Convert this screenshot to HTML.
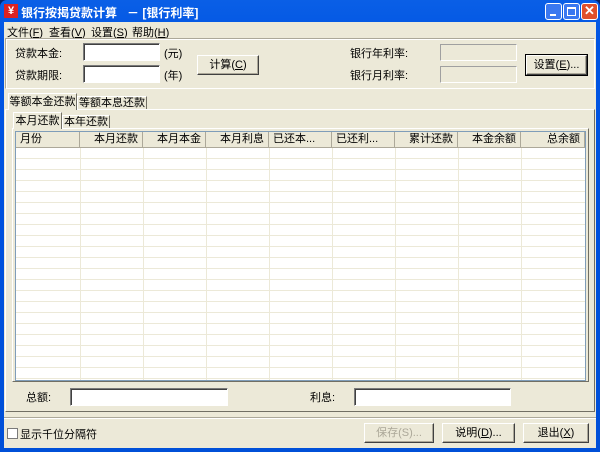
<!DOCTYPE html><html><head><meta charset="utf-8"><style>
*{margin:0;padding:0;box-sizing:border-box}
body{width:600px;height:452px;overflow:hidden;background:#0a246a;font-family:"Liberation Sans","Noto Sans CJK SC","WenQuanYi Zen Hei",sans-serif;font-size:11px;color:#000;position:relative}
.a{position:absolute}
#win{left:0;top:0;width:600px;height:452px;background:linear-gradient(#0a5fe6,#0054e3 10%,#0050d8);border-radius:7px 7px 0 0}
#cl{left:4px;top:22px;width:592px;height:426px;background:#ece9d8}
.t{font-weight:bold;color:#fff;font-size:12px}
.inp{background:#fff;border-top:1px solid #7a7a7a;border-left:1px solid #7a7a7a;border-bottom:1px solid #fff;border-right:1px solid #fff;box-shadow:inset 1px 1px 0 #404040}
.ro{background:#ece9d8;border:1px solid #a0a0a0;border-right-color:#fff;border-bottom-color:#fff}
.btn{border:1px solid #fff;border-right-color:#404040;border-bottom-color:#404040;box-shadow:inset -1px -1px 0 #aca899;text-align:center;line-height:18px;background:#ece9d8}
.tb{border:1px solid #fff;border-bottom:none;border-right-color:#716f64;background:#ece9d8;font-size:11px;text-align:center;white-space:nowrap;overflow:hidden}
.hd{border-right:1px solid #aca899;border-bottom:1px solid #aca899;height:16px;line-height:15px;padding:0 4px;text-align:right;background:#ece9d8;overflow:hidden;white-space:nowrap}
</style></head><body>
<div id="win" class="a"></div>
<div class="a" style="left:4px;top:4px;width:14px;height:14px;background:#d22;color:#fff;font-size:11px;line-height:14px;text-align:center;font-weight:bold">¥</div>
<div class="a t" style="left:21px;top:4px">银行按揭贷款计算&nbsp;&nbsp;&nbsp;－&nbsp;[银行利率]</div>
<div class="a" style="left:545px;top:3px;width:17px;height:17px;background:#3a78f0;border:1px solid #fff;border-radius:3px"><div class="a" style="left:4px;top:10px;width:6px;height:2px;background:#fff"></div></div>
<div class="a" style="left:563px;top:3px;width:17px;height:17px;background:#3a78f0;border:1px solid #fff;border-radius:3px"><div class="a" style="left:3px;top:3px;width:9px;height:9px;border:1px solid #fff;border-top-width:2px"></div></div>
<div class="a" style="left:581px;top:3px;width:17px;height:17px;background:#e0502c;border:1px solid #fff;border-radius:3px;color:#fff;font-weight:bold;font-size:13px;line-height:14px;text-align:center">✕</div>
<div id="cl" class="a"></div>
<div class="a" style="left:7px;top:24px">文件(<u>F</u>)</div>
<div class="a" style="left:49px;top:24px">查看(<u>V</u>)</div>
<div class="a" style="left:91px;top:24px">设置(<u>S</u>)</div>
<div class="a" style="left:132px;top:24px">帮助(<u>H</u>)</div>
<div class="a" style="left:5px;top:38px;width:590px;height:51px;border:1px solid #aca899;border-right-color:#fff;border-bottom-color:#fff;box-shadow:inset 1px 1px 0 #fff"></div>
<div class="a" style="left:15px;top:45px">贷款本金:</div>
<div class="a" style="left:15px;top:67px">贷款期限:</div>
<div class="a inp" style="left:83px;top:43px;width:77px;height:18px"></div>
<div class="a inp" style="left:83px;top:65px;width:77px;height:18px"></div>
<div class="a" style="left:164px;top:45px">(元)</div>
<div class="a" style="left:164px;top:67px">(年)</div>
<div class="a btn" style="left:197px;top:55px;width:62px;height:20px">计算(<u>C</u>)</div>
<div class="a" style="left:350px;top:45px">银行年利率:</div>
<div class="a" style="left:350px;top:67px">银行月利率:</div>
<div class="a ro" style="left:440px;top:44px;width:77px;height:17px"></div>
<div class="a ro" style="left:440px;top:66px;width:77px;height:17px"></div>
<div class="a btn" style="left:526px;top:55px;width:61px;height:20px;outline:1px solid #000">设置(<u>E</u>)...</div>
<div class="a" style="left:5px;top:109px;width:590px;height:303px;border:1px solid #fff;border-right-color:#716f64;border-bottom-color:#716f64"></div>
<div class="a tb" style="left:8px;top:93px;width:69px;height:17px;line-height:16px">等额本金还款</div>
<div class="a tb" style="left:77px;top:96px;width:70px;height:13px;line-height:13px">等额本息还款</div>
<div class="a" style="left:12px;top:128px;width:577px;height:254px;border:1px solid #fff;border-right-color:#716f64;border-bottom-color:#716f64"></div>
<div class="a tb" style="left:13px;top:112px;width:49px;height:17px;line-height:16px">本月还款</div>
<div class="a tb" style="left:62px;top:115px;width:48px;height:13px;line-height:13px">本年还款</div>
<div class="a" style="left:15px;top:131px;width:571px;height:250px;background:#fff;border:1px solid #7f9db9;overflow:hidden">
<svg class="a" style="left:0;top:0" width="571" height="250">
<g stroke="#ece9d8" stroke-width="1">
<line x1="0" x2="571" y1="26.5" y2="26.5"/><line x1="0" x2="571" y1="37.5" y2="37.5"/><line x1="0" x2="571" y1="48.5" y2="48.5"/><line x1="0" x2="571" y1="59.5" y2="59.5"/><line x1="0" x2="571" y1="70.5" y2="70.5"/><line x1="0" x2="571" y1="81.5" y2="81.5"/><line x1="0" x2="571" y1="92.5" y2="92.5"/><line x1="0" x2="571" y1="103.5" y2="103.5"/><line x1="0" x2="571" y1="114.5" y2="114.5"/><line x1="0" x2="571" y1="125.5" y2="125.5"/><line x1="0" x2="571" y1="136.5" y2="136.5"/><line x1="0" x2="571" y1="147.5" y2="147.5"/><line x1="0" x2="571" y1="158.5" y2="158.5"/><line x1="0" x2="571" y1="169.5" y2="169.5"/><line x1="0" x2="571" y1="180.5" y2="180.5"/><line x1="0" x2="571" y1="191.5" y2="191.5"/><line x1="0" x2="571" y1="202.5" y2="202.5"/><line x1="0" x2="571" y1="213.5" y2="213.5"/><line x1="0" x2="571" y1="224.5" y2="224.5"/><line x1="0" x2="571" y1="235.5" y2="235.5"/><line x1="0" x2="571" y1="246.5" y2="246.5"/>
<line y1="0" y2="250" x1="64.5" x2="64.5"/><line y1="0" y2="250" x1="127.5" x2="127.5"/><line y1="0" y2="250" x1="190.5" x2="190.5"/><line y1="0" y2="250" x1="253.5" x2="253.5"/><line y1="0" y2="250" x1="316.5" x2="316.5"/><line y1="0" y2="250" x1="379.5" x2="379.5"/><line y1="0" y2="250" x1="442.5" x2="442.5"/><line y1="0" y2="250" x1="505.5" x2="505.5"/>
</g></svg>
<div class="a" style="left:0;top:0;display:flex">
<div class="hd" style="width:64px;text-align:left">月份</div><div class="hd" style="width:63px">本月还款</div><div class="hd" style="width:63px">本月本金</div><div class="hd" style="width:63px">本月利息</div><div class="hd" style="width:63px;text-align:left">已还本...</div><div class="hd" style="width:63px;text-align:left">已还利...</div><div class="hd" style="width:63px">累计还款</div><div class="hd" style="width:63px">本金余额</div><div class="hd" style="width:64px">总余额</div>
</div></div>
<div class="a" style="left:26px;top:389px">总额:</div>
<div class="a inp" style="left:70px;top:388px;width:158px;height:18px"></div>
<div class="a" style="left:310px;top:389px">利息:</div>
<div class="a inp" style="left:354px;top:388px;width:157px;height:18px"></div>
<div class="a" style="left:4px;top:417px;width:592px;height:1px;background:#aca899"></div>
<div class="a" style="left:4px;top:418px;width:592px;height:1px;background:#fff"></div>
<div class="a" style="left:7px;top:428px;width:11px;height:11px;background:#fff;border:1px solid #7a7a7a"></div>
<div class="a" style="left:20px;top:426px">显示千位分隔符</div>
<div class="a btn" style="left:364px;top:423px;width:70px;height:20px;color:#aca899">保存(S)...</div>
<div class="a btn" style="left:442px;top:423px;width:73px;height:20px">说明(<u>D</u>)...</div>
<div class="a btn" style="left:523px;top:423px;width:66px;height:20px">退出(<u>X</u>)</div>
</body></html>
